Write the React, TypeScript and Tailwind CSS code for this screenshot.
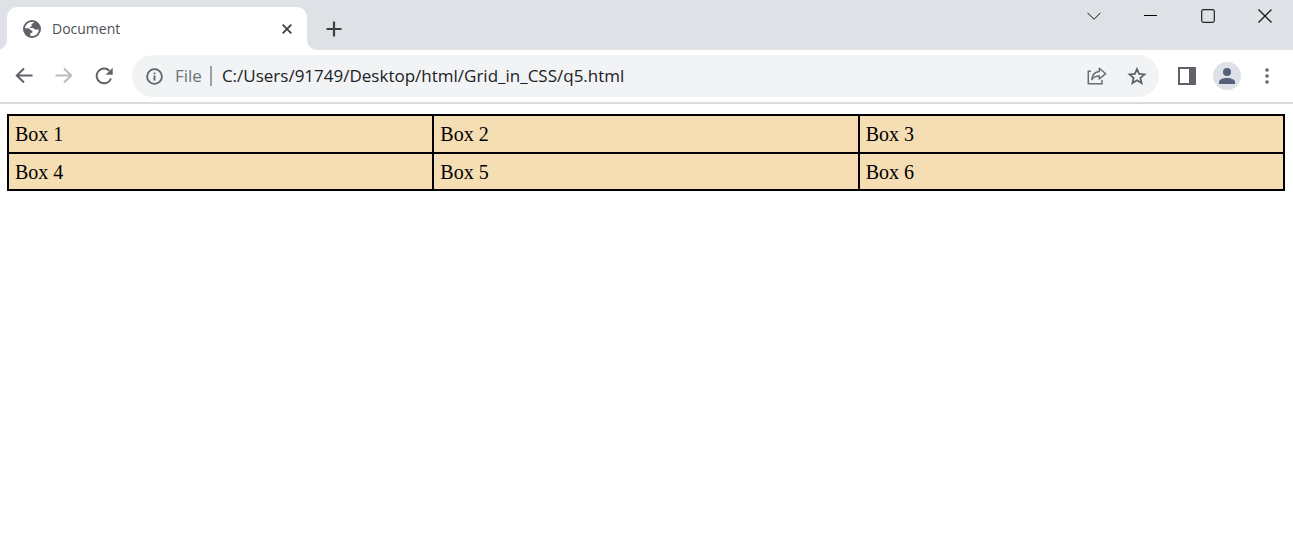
import type { ReactNode } from "react";

const boxes = ["Box 1", "Box 2", "Box 3", "Box 4", "Box 5", "Box 6"];

type IconButtonProps = {
  label: string;
  className: string;
  disabled?: boolean;
  children: ReactNode;
};

function IconButton({ label, className, disabled, children }: IconButtonProps) {
  return (
    <button
      type="button"
      aria-label={label}
      disabled={disabled}
      className={`flex shrink-0 items-center justify-center ${className}`}
    >
      {children}
    </button>
  );
}

function GlobeIcon() {
  return (
    <svg width="18" height="18" viewBox="0 0 18 18" aria-hidden="true">
      <circle cx="9" cy="9" r="9" fill="#5f6368" />
      <path
        d="M11.2 2.1C10.8 3.6 9 3.4 8.6 4.2c-.4.8.5 1.400-.3 2.200-.5.5-1.500.3-1.500 1.100 0 .9 1.400.4 3 .5 1.200.1 1.300 1.200 2.200 1.500 1.200.4 2.300-.3 3.900.2C15.400 13 12.800 16 9.200 16c-.8 0-1.500-.1-1.900-.3v-1.500c0-.7.3-1.200 1-1.200.9 0 1.200-.5 1.200-1.200 0-.9-.6-1.300-1.300-1.500-1.400-.4-1.500-1.900-2.800-2H2C2.400 4.700 5.300 2 9 2c.8 0 1.600 0 2.200.1z"
        fill="#fff"
      />
    </svg>
  );
}

function TabStrip() {
  return (
    <header className="flex h-[50px] items-start bg-[#dee1e6] pl-[7px]">
      <div className="relative mt-[7px] flex h-[43px] w-[300px] items-center rounded-t-[10px] bg-white pr-2.5 pl-4">
        <svg className="absolute bottom-0 -left-2.5" width="10" height="10" viewBox="0 0 10 10" aria-hidden="true">
          <path d="M10 0v10H0A10 10 0 0 0 10 0z" fill="#fff" />
        </svg>
        <svg className="absolute -right-2.5 bottom-0" width="10" height="10" viewBox="0 0 10 10" aria-hidden="true">
          <path d="M0 0v10h10A10 10 0 0 1 0 0z" fill="#fff" />
        </svg>
        <GlobeIcon />
        <span className="ml-[11px] flex-1 text-[14px] leading-5 text-[#4c5054]">Document</span>
        <IconButton label="Close tab" className="size-5">
          <svg width="10" height="10" viewBox="0 0 10 10" fill="none" stroke="#3c4043" strokeWidth="1.800" aria-hidden="true">
            <path d="M.7.7l8.600 8.600M9.300.7L.7 9.300" />
          </svg>
        </IconButton>
      </div>
      <IconButton label="New tab" className="mt-3.5 ml-3 size-[30px]">
        <svg width="16" height="16" viewBox="0 0 16 16" fill="none" stroke="#3c4043" strokeWidth="2.200" aria-hidden="true">
          <path d="M8 .5v15M.5 8h15" />
        </svg>
      </IconButton>
      <div className="ml-auto flex">
        <IconButton label="Search tabs" className="h-8 w-14">
          <svg width="14" height="8" viewBox="0 0 14 8" fill="none" stroke="#111" aria-hidden="true">
            <path d="M.5.8L7 7.300 13.500.8" />
          </svg>
        </IconButton>
        <IconButton label="Minimize" className="h-8 w-[57px]">
          <svg width="13" height="2" viewBox="0 0 13 2" aria-hidden="true">
            <path d="M0 0h13v1H0z" fill="#000" />
          </svg>
        </IconButton>
        <IconButton label="Maximize" className="h-8 w-[58px]">
          <svg width="14" height="14" viewBox="0 0 14 14" fill="none" stroke="#222" strokeWidth="1.200" aria-hidden="true">
            <rect x=".7" y=".7" width="12.600" height="12.600" rx="1.800" />
          </svg>
        </IconButton>
        <IconButton label="Close window" className="h-8 w-14">
          <svg width="14" height="14" viewBox="0 0 14 14" fill="none" stroke="#111" strokeWidth="1.200" aria-hidden="true">
            <path d="M.5.5l13 13M13.500.5l-13 13" />
          </svg>
        </IconButton>
      </div>
    </header>
  );
}

function Toolbar() {
  return (
    <nav className="flex items-center border-b-2 border-[#dadbdc] bg-white py-[5px] pr-1.5 pl-1">
      <IconButton label="Back" className="size-10">
        <svg width="18" height="18" viewBox="0 0 18 18" fill="none" stroke="#5f6368" strokeWidth="2" aria-hidden="true">
          <path d="M9 1.500L1.800 8.500 9 15.500M2 8.500h15.500" />
        </svg>
      </IconButton>
      <IconButton label="Forward" className="size-10" disabled>
        <svg width="18" height="18" viewBox="0 0 18 18" fill="none" stroke="#babcbe" strokeWidth="2" aria-hidden="true">
          <path d="M9 1.500l7.200 7L9 15.500M16 8.500H.5" />
        </svg>
      </IconButton>
      <IconButton label="Reload" className="size-10">
        <svg width="18" height="18" viewBox="0 0 18 18" aria-hidden="true">
          <path d="M14.300 3.700A7.400 7.400 0 1 0 16 11.500" fill="none" stroke="#5f6368" strokeWidth="2" />
          <path d="M17.700.8v7h-7z" fill="#5f6368" />
        </svg>
      </IconButton>
      <div className="ml-2 flex h-[42px] min-w-0 flex-1 items-center rounded-full bg-[#f1f3f4] pr-0.5 pl-3.5">
        <svg className="shrink-0" width="17" height="17" viewBox="0 0 17 17" aria-hidden="true">
          <circle cx="8.500" cy="8.500" r="7.400" fill="none" stroke="#5f6368" strokeWidth="1.800" />
          <path d="M7.600 7.600h1.800v4.800H7.600zM7.600 4.500h1.800v1.800H7.600z" fill="#5f6368" />
        </svg>
        <label htmlFor="address" className="ml-3 border-r-2 border-[#9aa0a6] pr-2 text-[17px] leading-5 text-[#6f7377]">
          File
        </label>
        <input
          id="address"
          type="text"
          defaultValue="C:/Users/91749/Desktop/html/Grid_in_CSS/q5.html"
          className="ml-2.5 min-w-0 flex-1 bg-transparent text-[17px] leading-6 text-[#202124] outline-none"
        />
        <IconButton label="Share" className="size-10">
          <svg width="20" height="18" viewBox="0 0 20 18" fill="none" stroke="#6b6e73" strokeWidth="1.500" aria-hidden="true">
            <path d="M4 4.200H1.300v12.600H15V13" />
            <path d="M12.300 1.200L18.700 6.700l-6.400 5.300V8.900C8.800 8.800 6.500 10 4.800 12.500 5.200 8 7.800 4.900 12.300 4.400z" strokeLinejoin="round" />
          </svg>
        </IconButton>
        <IconButton label="Bookmark this tab" className="size-10">
          <svg width="20" height="20" viewBox="0 0 20 20" fill="none" stroke="#5f6368" strokeWidth="1.800" aria-hidden="true">
            <path d="M10 3l2.100 4.900 5.400.5-4.100 3.500 1.200 5.200L10 14.300l-4.600 2.800 1.200-5.200-4.100-3.500 5.400-.5z" />
          </svg>
        </IconButton>
      </div>
      <IconButton label="Side panel" className="ml-2 size-10">
        <svg width="18" height="18" viewBox="0 0 18 18" aria-hidden="true">
          <path d="M0 0h18v18H0zM2 2v14h9V2z" fill="#5f6368" fillRule="evenodd" />
        </svg>
      </IconButton>
      <IconButton label="Profile" className="mx-1.5 size-7 rounded-full bg-[#dee1e6]">
        <svg width="16" height="16" viewBox="0 0 16 16" fill="#55617a" aria-hidden="true">
          <circle cx="8" cy="4" r="4" />
          <path d="M0 16v-2.200C0 11.300 4.700 10 8 10s8 1.300 8 3.800V16z" />
        </svg>
      </IconButton>
      <IconButton label="Menu" className="size-10">
        <svg width="4" height="16" viewBox="0 0 4 16" fill="#5f6368" aria-hidden="true">
          <circle cx="2" cy="2" r="1.800" />
          <circle cx="2" cy="8" r="1.800" />
          <circle cx="2" cy="14" r="1.800" />
        </svg>
      </IconButton>
    </nav>
  );
}

export default function App() {
  return (
    <div className="min-h-screen bg-white font-['Open_Sans','Noto_Sans',sans-serif]">
      <TabStrip />
      <Toolbar />
      <main className="px-2 pt-2.5 font-['Liberation_Serif',serif]">
        <div className="-ml-px grid min-h-[77px] grid-cols-3 gap-0.5 bg-black p-0.5">
          {boxes.map((box) => (
            <div key={box} className="bg-[#f5deb3] px-1.5 pt-[7px] pb-[5px] text-[20px] leading-[23px] text-black">
              {box}
            </div>
          ))}
        </div>
      </main>
    </div>
  );
}
